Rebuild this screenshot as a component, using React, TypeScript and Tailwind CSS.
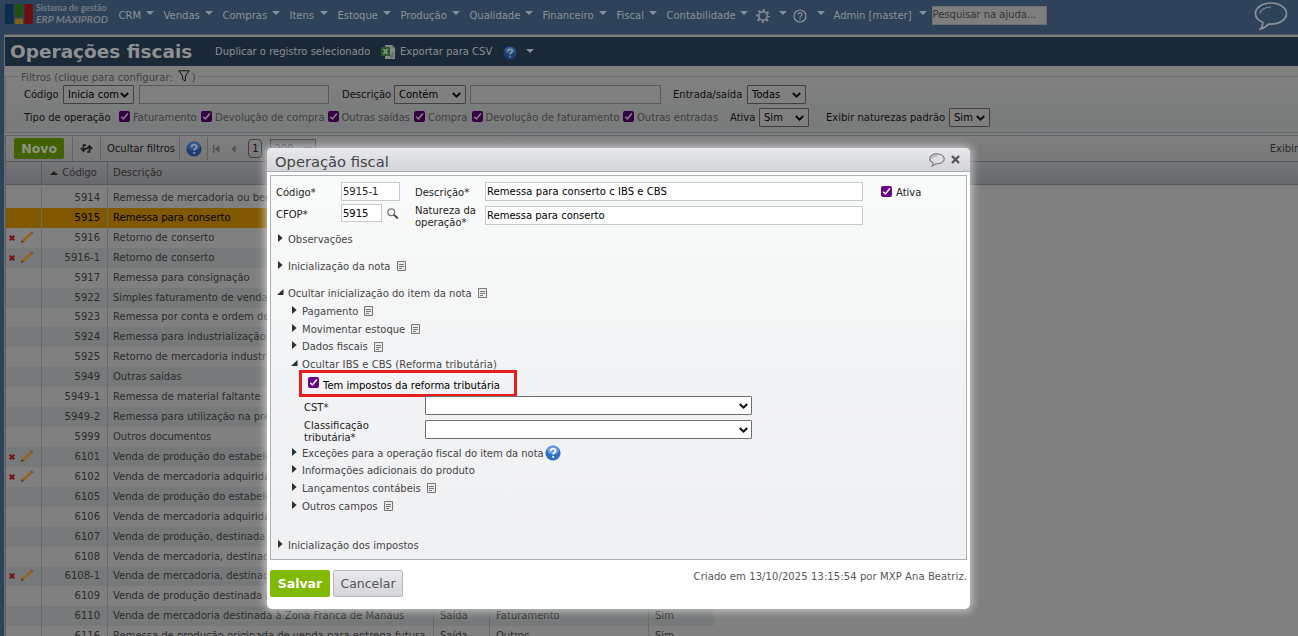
import React from 'react';
import clsx from 'clsx';

const menus = [
    { label: 'CRM', width: 'w-[45px]' },
    { label: 'Vendas', width: 'w-[59px]' },
    { label: 'Compras', width: 'w-[67px]' },
    { label: 'Itens', width: 'w-[48px]' },
    { label: 'Estoque', width: 'w-[63px]' },
    { label: 'Produção', width: 'w-[69px]' },
    { label: 'Qualidade', width: 'w-[73px]' },
    { label: 'Financeiro', width: 'w-[74px]' },
    { label: 'Fiscal', width: 'w-[50px]' },
    { label: 'Contabilidade', width: 'w-[91px]' },
];

const tipos = [
    { label: 'Faturamento', width: 'w-[82px]' },
    { label: 'Devolução de compra', width: 'w-[126.5px]' },
    { label: 'Outras saídas', width: 'w-[86.5px]' },
    { label: 'Compra', width: 'w-[57.5px]' },
    { label: 'Devolução de faturamento', width: 'w-[151.5px]' },
    { label: 'Outras entradas', width: 'w-[107px]' },
];

const rows = [
    { code: '5914', text: 'Remessa de mercadoria ou bem' },
    { code: '5915', text: 'Remessa para conserto', selected: true },
    { code: '5916', text: 'Retorno de conserto', edit: true },
    { code: '5916-1', text: 'Retorno de conserto', edit: true },
    { code: '5917', text: 'Remessa para consignação' },
    { code: '5922', text: 'Simples faturamento de venda' },
    { code: '5923', text: 'Remessa por conta e ordem de' },
    { code: '5924', text: 'Remessa para industrialização' },
    { code: '5925', text: 'Retorno de mercadoria industr' },
    { code: '5949', text: 'Outras saídas' },
    { code: '5949-1', text: 'Remessa de material faltante' },
    { code: '5949-2', text: 'Remessa para utilização na pre' },
    { code: '5999', text: 'Outros documentos' },
    { code: '6101', text: 'Venda de produção do estabele', edit: true },
    { code: '6102', text: 'Venda de mercadoria adquirida', edit: true },
    { code: '6105', text: 'Venda de produção do estabele' },
    { code: '6106', text: 'Venda de mercadoria adquirida' },
    { code: '6107', text: 'Venda de produção, destinada' },
    { code: '6108', text: 'Venda de mercadoria, destinada' },
    { code: '6108-1', text: 'Venda de mercadoria, destinada', edit: true },
    { code: '6109', text: 'Venda de produção destinada à' },
    { code: '6110', text: 'Venda de mercadoria destinada à Zona Franca de Manaus', es: 'Saída', tipo: 'Faturamento' },
    { code: '6116', text: 'Remessa de produção originada de venda para entrega futura', es: 'Saída', tipo: 'Outros' },
];

const Caret = ({ className }: { className?: string }) => (
    <svg className={clsx('h-[4px] w-[8px] shrink-0', className)} viewBox="0 0 8 4">
        <path d="M0 0h8L4 4z" fill="#868e98" />
    </svg>
);

const Chevron = () => (
    <svg className="h-[6px] w-[9px] shrink-0" viewBox="0 0 9 6">
        <path d="M.8 1l3.7 3.6L8.2 1" fill="none" stroke="#0a0a0a" strokeWidth="1.9" />
    </svg>
);

const Check = ({ dim }: { dim?: boolean }) => (
    <span className={clsx('flex size-[11px] shrink-0 items-center justify-center rounded-[2px]', dim ? 'bg-[#350042]' : 'bg-[#6a0085]')}>
        <svg className="size-[9px]" viewBox="0 0 9 9">
            <path d="M1.2 4.8l2.2 2.2L7.9 1.6" fill="none" stroke={dim ? '#8a858c' : '#fff'} strokeWidth="1.5" />
        </svg>
    </span>
);

const Help = ({ dim, className }: { dim?: boolean; className?: string }) => (
    <svg className={clsx('shrink-0', className)} viewBox="0 0 16 16">
        <circle cx="8" cy="8" r="7.6" fill={dim ? '#1d3d6e' : '#2f6fc4'} />
        <ellipse cx="8" cy="5" rx="6" ry="4.2" fill={dim ? '#34588c' : '#659ce0'} />
        <path d="M5.6 6.2c0-3.3 5-3.3 5-.5 0 1.8-2.4 1.9-2.4 3.9M8.2 11v1.8" fill="none" stroke={dim ? '#8c96a4' : '#fff'} strokeWidth="1.8" />
    </svg>
);

const Balloon = ({ className, color, line }: { className?: string; color: string; line: number }) => (
    <svg className={clsx('shrink-0', className)} viewBox="0 0 34 30" fill="none" stroke={color} strokeWidth={line}>
        <path d="M17 2C8.500 2 1.500 6.500 1.500 12.500c0 4 3 7.200 7.500 9-.2 2.600-1.200 4.700-2.600 6.500 4-1 6.600-3 8.100-5 .8.100 1.600.100 2.500.100 8.500 0 15.500-4.600 15.500-10.500S25.500 2 17 2z" />
        <path d="M6 12.500C6.500 9.200 10.500 6.400 17 6" strokeWidth={line * 0.7} />
    </svg>
);

const Select = ({ value, className }: { value: string; className: string }) => (
    <div className={clsx('flex h-[19px] shrink-0 items-center justify-between rounded-[1px] border border-[#404040] bg-[#808080] pr-[4px] pl-[4px] text-black', className)}>
        <span>{value}</span>
        <Chevron />
    </div>
);

const FormSelect = () => (
    <div className="flex h-[19px] w-[327px] items-center justify-end rounded-[1px] border border-[#6f6f6f] bg-white pr-[3px]">
        <Chevron />
    </div>
);

const NavBar = () => (
    <div className="flex h-[34px] shrink-0 items-start bg-[#2e425a] text-[#8c9299]">
        <svg className="mt-[4px] ml-[5px] h-[20px] w-[28px] shrink-0" viewBox="0 0 28 20">
            <rect width="8.500" height="20" rx="1" fill="#0b2c4c" />
            <rect x="10" width="8" height="13" rx="1" fill="#205010" />
            <rect x="10" y="14.500" width="8" height="5.500" rx="1" fill="#806014" />
            <rect x="19.500" width="8.300" height="20" rx="1" fill="#700c10" />
        </svg>
        <div className="ml-[3px] w-[82px] shrink-0 pt-[2px] font-[Lato] font-bold whitespace-nowrap text-[#747b83]">
            <div className="text-[8.800px] leading-[11px]">Sistema de gestão</div>
            <div className="text-[10.300px] leading-[12px] italic">ERP MAXIPROD</div>
        </div>
        <div className="flex h-[30px] items-center pl-[0.5px]">
            {menus.map((m) => (
                <div key={m.label} className={clsx('flex shrink-0 justify-between pr-[10px]', m.width)}>
                    <span className="pt-px">{m.label}</span>
                    <Caret className="mt-[3.5px]" />
                </div>
            ))}
            <svg className="mt-[2px] ml-[-2px] size-[14px]" viewBox="0 0 14 14" fill="none" stroke="#8c9299">
                <circle cx="7" cy="7" r="4.200" strokeWidth="1.500" />
                <circle cx="7" cy="7" r="6" strokeWidth="1.800" strokeDasharray="2.100 2.612" strokeDashoffset="1" />
            </svg>
            <Caret className="mt-[-4px] ml-[9px]" />
            <svg className="mt-[2px] ml-[6px] size-[14px]" viewBox="0 0 14 14" fill="none" stroke="#8c9299">
                <circle cx="7" cy="7" r="6" strokeWidth="1.200" />
                <path d="M5.100 5.600c0-2.700 3.900-2.600 3.900-.3 0 1.500-2 1.600-2 3.100M7 9.300v1.400" strokeWidth="1.200" />
            </svg>
            <Caret className="mt-[-4px] ml-[10px]" />
            <span className="ml-[9px] w-[85px] pt-px whitespace-nowrap">Admin [master]</span>
            <Caret className="mt-[-4px]" />
            <div className="ml-[5px] flex h-[19px] w-[115px] items-center overflow-hidden border border-[#6b6f74] bg-[#7e7e7e] whitespace-nowrap text-[#353535]">Pesquisar na ajuda...</div>
        </div>
        <Balloon className="mt-px ml-[207px] h-[30px] w-[34px]" color="#8c9299" line={1.7} />
    </div>
);

const TitleBar = () => (
    <div className="flex h-[29px] shrink-0 items-center bg-[#1a2938] whitespace-nowrap text-[#8b8f93]">
        <h1 className="w-[210px] pl-[5px] text-[18.500px] font-bold text-[#8e9092]">Operações fiscais</h1>
        <span className="w-[166px] pt-px">Duplicar o registro selecionado</span>
        <svg className="h-[14px] w-[15px]" viewBox="0 0 15 14">
            <path d="M4 0h7l3 3v11H4z" fill="#828784" />
            <path d="M11 0v3h3" fill="#6b716c" />
            <path d="M12 7v6M10 9v4" stroke="#555d58" />
            <path d="M0 2h9v9H0z" fill="#2c592e" />
            <path d="M2.500 4l4 5M6.500 4l-4 5" stroke="#899988" strokeWidth="1.400" />
        </svg>
        <span className="ml-[4px] w-[103px] pt-px">Exportar para CSV</span>
        <Help dim className="mt-[3px] h-[14px] w-[14px]" />
        <Caret className="mt-[-2px] ml-[9px]" />
    </div>
);

const Filters = () => (
    <div className="relative mt-[10px] h-[57px] shrink-0 border border-r-0 border-[#6a6d70] bg-linear-to-b from-[#808080] to-[#787b7b] text-[#101010]">
        <div className="absolute -top-[7px] left-[13px] flex h-[14px] items-center bg-[#808080] px-[2px] whitespace-nowrap text-[#404040]">
            <span className="pt-px tracking-[0.05px]">Filtros (clique para configurar:</span>
            <svg className="mt-[-2px] mr-[2px] ml-[5px] h-[12px] w-[12px]" viewBox="0 0 12 12">
                <path d="M.8.800h10.400L7.400 6v5L4.600 9.300V6z" fill="none" stroke="#111" />
            </svg>
            <span className="pt-px">)</span>
        </div>
        <div className="mt-[8px] flex h-[19px] items-center whitespace-nowrap">
            <span className="w-[57px] pt-px pl-[18px]">Código</span>
            <Select value="Inicia com" className="w-[71px]" />
            <div className="ml-[5px] h-[19px] w-[190px] border border-[#5b5b5b] bg-[#808080]" />
            <span className="ml-[13px] w-[52px] pt-px">Descrição</span>
            <Select value="Contém" className="w-[72px]" />
            <div className="ml-[4px] h-[19px] w-[191px] border border-[#5b5b5b] bg-[#808080]" />
            <span className="ml-[12px] w-[74px] pt-px">Entrada/saída</span>
            <Select value="Todas" className="w-[59px]" />
        </div>
        <div className="mt-[4px] flex h-[19px] items-center whitespace-nowrap">
            <span className="w-[113px] pl-[18px]">Tipo de operação</span>
            {tipos.map((t) => (
                <div key={t.label} className={clsx('flex shrink-0 items-center gap-[3px] text-[#3e3e3e]', t.width)}>
                    <span className="mt-[-2px]"><Check dim /></span>
                    <span className="pt-px">{t.label}</span>
                </div>
            ))}
            <span className="w-[29px] pt-px">Ativa</span>
            <Select value="Sim" className="w-[50px]" />
            <span className="ml-[17px] w-[123px] pt-px">Exibir naturezas padrão</span>
            <Select value="Sim" className="w-[41px]" />
        </div>
    </div>
);

const Toolbar = () => (
    <div className="mt-[2px] flex h-[26px] shrink-0 items-center border-t border-l border-[#5d5f62] bg-linear-to-b from-[#7f7f7f] to-[#787878] whitespace-nowrap text-[#151515]">
        <div className="ml-[8px] flex h-[21px] w-[51px] items-center justify-center rounded-[2px] bg-[#426100] text-[12.500px] font-bold text-[#8d9584]">Novo</div>
        <div className="ml-[8px] flex h-[24px] w-[29px] items-center justify-center border-x border-[#616161]">
            <svg className="h-[9px] w-[13px]" viewBox="0 0 13 9" fill="none" stroke="#1c1c1c" strokeWidth="1.700">
                <path d="M6 1.200H3.500V6M.8 4.200l2.700 2.800 2.700-2.800M7 8h2.500V3M6.800 4.800l2.700-2.800 2.700 2.800" />
            </svg>
        </div>
        <div className="flex h-[24px] w-[80px] items-center border-r border-[#616161] pl-[6px]">Ocultar filtros</div>
        <div className="flex h-[24px] w-[28px] items-center justify-center border-r border-[#616161]">
            <Help dim className="ml-px size-[16px]" />
        </div>
        <svg className="ml-[5px] h-[8px] w-[24px]" viewBox="0 0 24 8" fill="#505458">
            <path d="M0 0h1.500v8H0zM6.500 0v8L1.800 4zM23 0v8l-4.500-4z" />
        </svg>
        <div className="ml-[12px] flex h-[19px] w-[14px] items-center justify-center rounded-[4px] border border-[#3f3f3f]">1</div>
        <div className="ml-[8px] flex h-[19px] w-[46px] items-center justify-between border border-[#4a4a4a] bg-[#707274] px-[3px] text-[#333]">
            200
            <svg className="h-[4px] w-[7px]" viewBox="0 0 8 4"><path d="M0 0h8L4 4z" fill="#444" /></svg>
        </div>
        <span className="ml-[954px] text-[#2b2b2b]">Exibir</span>
    </div>
);

const Grid = () => (
    <div className="shrink-0 border-l border-[#5d5f62] text-[#2b2b2b]">
        <div className="flex h-[24px] items-center border-y border-[#54585c] bg-linear-to-b from-[#747678] to-[#67696c]">
            <div className="h-full w-[36px] border-r border-[#595b5d]" />
            <div className="flex h-full w-[66px] items-center justify-end gap-[4px] border-r border-[#595b5d] pr-[10px]">
                <svg className="h-[4px] w-[8px]" viewBox="0 0 8 4"><path d="M0 4h8L4 0z" fill="#1e1e1e" /></svg>
                Código
            </div>
            <div className="pl-[5px]">Descrição</div>
        </div>
        <div className="h-[3px]" />
        {rows.map((r, i) => (
            <div
                key={r.code}
                className={clsx('flex h-[19.93px] w-[708px] items-center whitespace-nowrap', r.selected ? 'bg-[#805800] text-black' : i % 2 ? 'bg-[#757979]' : 'bg-[#808080]')}
            >
                <div className="flex h-full w-[36px] items-center border-r border-[#676a6a] pl-[3px]">
                    {r.edit && (
                        <>
                            <svg className="size-[6px]" viewBox="0 0 6 6"><path d="M.7.700l4.600 4.600M5.300.700L.7 5.300" stroke="#781016" strokeWidth="2" /></svg>
                            <svg className="mt-[-2px] ml-[6px] h-[12px] w-[13px]" viewBox="0 0 13 12">
                                <path d="M1.500 10.500L10.800 2" stroke="#966422" strokeWidth="3" />
                                <path d="M10.200 2.500l1.500-1.400" stroke="#80514a" strokeWidth="3" />
                                <path d="M0 12l.8-2.800L3 11z" fill="#40342a" />
                            </svg>
                        </>
                    )}
                </div>
                <div className="flex h-full w-[66px] items-center justify-end border-r border-[#676a6a] pr-[7px]">{r.code}</div>
                <div className="flex h-full w-[326px] items-center border-r border-[#676a6a] pl-[5px]">{r.text}</div>
                <div className="flex h-full w-[56px] items-center border-r border-[#676a6a] pl-[6px]">{r.es}</div>
                <div className="flex h-full w-[159px] items-center border-r border-[#676a6a] pl-[6px]">{r.tipo}</div>
                <div className="pl-[6px]">{r.es && 'Sim'}</div>
            </div>
        ))}
    </div>
);

type NodeProps = {
    label: string
    open?: boolean
    note?: boolean
    help?: boolean
    className?: string
}
const TreeNode = ({ label, open, note, help, className }: NodeProps) => (
    <div className={clsx('flex items-center whitespace-nowrap text-[#454545]', className)}>
        <svg className="mt-[-3px] mr-[4px] ml-[-1px] h-[8px] w-[7px]" viewBox="0 0 7 8">
            <path d={open ? 'M6.500 1v6H0z' : 'M1 0l4.600 4L1 8z'} fill="#2e2e2e" />
        </svg>
        <span className="pt-px">{label}</span>
        {note && (
            <svg className="ml-[6px] h-[10px] w-[9px]" viewBox="0 0 9 10" fill="none" stroke="#777">
                <path d="M.5.500h8v9h-8z" fill="#ececec" />
                <path d="M2 3.500h5M2 5.500h5M2 7.500h3" />
            </svg>
        )}
        {help && <Help className="mt-[-1px] ml-px size-[16px]" />}
    </div>
);

const Dialog = () => (
    <div className="absolute top-[148px] left-[267px] flex h-[461px] w-[703px] flex-col rounded-[5px] bg-white text-[#222] shadow-[0_0_9px_2px_rgba(225,225,225,0.75)]">
        <div className="flex h-[24px] shrink-0 items-center rounded-t-[5px] border-b border-[#a9aeb6] bg-linear-to-b from-[#e9eaed] to-[#d2d4d9] pl-[8px]">
            <h2 className="grow pt-[4px] text-[14.700px] text-[#444]">Operação fiscal</h2>
            <Balloon className="h-[14px] w-[16px]" color="#777" line={2.4} />
            <svg className="mr-[10px] ml-[6px] size-[9px]" viewBox="0 0 9 9">
                <path d="M1 1l7 7M8 1L1 8" stroke="#555" strokeWidth="2.300" />
            </svg>
        </div>
        <div className="mx-[3px] mt-[3px] h-[385px] shrink-0 border border-[#a9b0b8] bg-linear-to-b from-[#f9fbfa] via-[#f1f2f4] via-60% to-[#f0f1f3]">
            <div className="flex pt-[6px] pl-[5px]">
                <div className="w-[139px]">
                    <div className="flex h-[19px] items-center">
                        <span className="w-[65px] pt-[2px]">Código*</span>
                        <div className="flex h-[19px] w-[59px] items-center border border-[#c6c9c9] bg-white pl-px">5915-1</div>
                    </div>
                    <div className="mt-[3px] flex h-[18px] items-center">
                        <span className="w-[65px] pt-[3px]">CFOP*</span>
                        <div className="flex h-[18px] w-[41px] items-center border border-[#c6c9c9] bg-white pt-px pl-px text-black">5915</div>
                        <svg className="ml-[5px] h-[11px] w-[12px]" viewBox="0 0 12 11" fill="none">
                            <circle cx="4.200" cy="4.200" r="3.400" stroke="#777" strokeWidth="1.200" />
                            <path d="M6.800 6.600l4 3.800" stroke="#444" strokeWidth="2" />
                        </svg>
                    </div>
                </div>
                <div>
                    <div className="flex h-[19px] items-center">
                        <span className="w-[70px] pt-[2px]">Descrição*</span>
                        <div className="flex h-[19px] w-[378px] items-center border border-[#c6c9c9] bg-white pl-px tracking-[0.06px] text-black">Remessa para conserto c IBS e CBS</div>
                        <span className="mt-[-1px] mr-[4px] ml-[18px]"><Check /></span>
                        <span className="pt-[2px]">Ativa</span>
                    </div>
                    <div className="mt-[5px] flex h-[19px] items-center">
                        <span className="w-[70px] pt-[2px] leading-[12px]">Natureza da<br />operação*</span>
                        <div className="flex h-[19px] w-[378px] items-center border border-[#c6c9c9] bg-white pt-px pl-px text-black">Remessa para conserto</div>
                    </div>
                </div>
            </div>
            <div className="pl-[7px]">
                <TreeNode label="Observações" className="mt-[5px] h-[18px]" />
                <TreeNode label="Inicialização da nota" note className="mt-[9px] h-[18px]" />
                <TreeNode label="Ocultar inicialização do item da nota" note open className="mt-[9px] h-[18px]" />
            </div>
            <div className="pl-[21px]">
                <TreeNode label="Pagamento" note className="h-[18px]" />
                <TreeNode label="Movimentar estoque" note className="h-[18px]" />
                <TreeNode label="Dados fiscais" note className="h-[17px]" />
                <TreeNode label="Ocultar IBS e CBS (Reforma tributária)" open className="h-[18px] tracking-[0.1px]" />
                <div className="mt-[-3px] ml-[7px] flex h-[27px] w-[218px] items-center border-3 border-[#e81e1e] pl-[6px] text-black">
                    <span className="mt-[-2px] mr-[4px]"><Check /></span>
                    <span className="pt-[4px]">Tem impostos da reforma tributária</span>
                </div>
                <div className="mt-[-1px] flex h-[19px] items-center pl-[12px]">
                    <span className="w-[121px] pt-[4px]">CST*</span>
                    <FormSelect />
                </div>
                <div className="mt-[5px] flex h-[19px] items-center pl-[12px]">
                    <span className="w-[121px] pt-[4px] leading-[12px]">Classificação<br />tributária*</span>
                    <FormSelect />
                </div>
                <TreeNode label="Exceções para a operação fiscal do item da nota" help className="mt-[5px] h-[18px] tracking-[-0.04px]" />
                <TreeNode label="Informações adicionais do produto" className="h-[17px]" />
                <TreeNode label="Lançamentos contábeis" note className="h-[18px]" />
                <TreeNode label="Outros campos" note className="h-[18px]" />
            </div>
            <TreeNode label="Inicialização dos impostos" className="mt-[21px] h-[18px] pl-[7px]" />
        </div>
        <div className="mx-[3px] mt-[10px] flex gap-[3px]">
            <div className="flex h-[27px] w-[60px] items-center justify-center rounded-[2px] bg-[#80b900] text-[12.500px] font-bold text-white">Salvar</div>
            <div className="flex h-[27px] w-[70px] items-center justify-center rounded-[2px] border border-[#b4b8be] bg-linear-to-b from-[#e9eaec] to-[#d3d5d9] text-[12.500px] text-[#555]">Cancelar</div>
            <div className="grow text-right tracking-[0.09px] text-[#555]">Criado em 13/10/2025 13:15:54 por MXP Ana Beatriz.</div>
        </div>
    </div>
);

export default function App() {
    return (
        <div className="relative flex h-[636px] w-[1298px] flex-col overflow-hidden bg-[#808080] font-['DejaVu_Sans',sans-serif] text-[10px] leading-[14px]">
            <NavBar />
            <div className="flex grow flex-col border-l-[4px] border-[#2e425a]">
                <div className="flex grow flex-col border-t border-l border-t-[#4d545c] border-l-[#6d7073] pt-[2px]">
                    <TitleBar />
                    <Filters />
                    <Toolbar />
                    <Grid />
                </div>
            </div>
            <Dialog />
        </div>
    );
}
